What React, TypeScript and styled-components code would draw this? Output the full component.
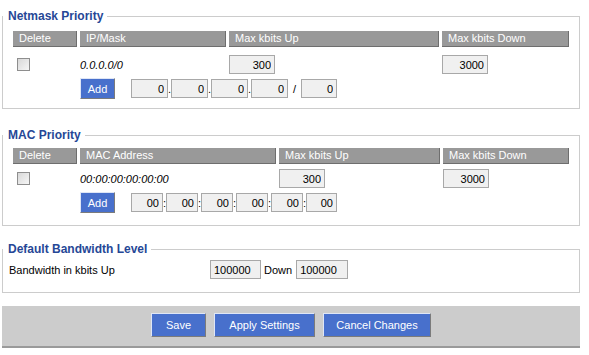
import React from 'react';
import styled, { createGlobalStyle } from 'styled-components';

const GlobalStyle = createGlobalStyle`
    body {
        margin: 0;
        background: #ffffff;
        font-family: "Liberation Sans", Arial, sans-serif;
        font-size: 11px;
        color: #000000;
    }
`;

const Page = styled.div`
    width: 578px;
    padding: 0 9px 0 2px;
    display: flex;
    flex-direction: column;
`;

const Section = styled.fieldset<{ $top: number; $pad?: string }>`
    margin: ${p => p.$top}px 0 0 0;
    padding: ${p => p.$pad || '0 9px 0 10px'};
    border: 1px solid #cccccc;
    min-width: 0;
`;

const Legend = styled.legend<{ $shift?: number }>`
    font-size: 12px;
    font-weight: bold;
    line-height: 14px;
    color: #264796;
    padding: 0 4px 0 5px;
    margin-left: ${p => (p.$shift ?? -10)}px;
`;

const Grid = styled.div<{ $cols: string; $lead: number; $tail: number }>`
    display: grid;
    grid-template-columns: ${p => p.$cols};
    column-gap: 3px;
    margin: ${p => p.$lead}px 0 ${p => p.$tail}px 0;
`;

const HeaderCell = styled.div`
    height: 16px;
    line-height: 15px;
    padding-left: 6px;
    background: #999999;
    color: #ffffff;
    border-right: 1px solid #6e6e6e;
    border-bottom: 1px solid #6e6e6e;
    box-sizing: border-box;
    white-space: nowrap;
`;

const Cell = styled.div<{ $top: number }>`
    display: flex;
    align-items: center;
    height: 19px;
    margin-top: ${p => p.$top}px;
`;

const Check = styled.input`
    appearance: none;
    width: 13px;
    height: 13px;
    margin: 0 0 0 4px;
    border: 1px solid #8e8e8e;
    background: linear-gradient(135deg, #d8d8d8, #f6f6f6);
    box-sizing: border-box;
`;

const Entry = styled.span`
    font-style: italic;
`;

const NumInput = styled.input<{ $w: number; $align?: string }>`
    width: ${p => p.$w}px;
    height: 19px;
    box-sizing: border-box;
    border: 1px solid #a8a8a8;
    background: #f0f0f0;
    font-family: "Liberation Sans", Arial, sans-serif;
    font-size: 11px;
    color: #000000;
    text-align: ${p => p.$align || 'right'};
    padding: 0 3px;
    margin: 0;
`;

const AddRow = styled.div`
    grid-column: 2 / span 3;
    display: flex;
    align-items: center;
    margin-top: 4px;
    height: 21px;
`;

const Blue = styled.button<{ $w: number; $h: number }>`
    width: ${p => p.$w}px;
    height: ${p => p.$h}px;
    padding: 0;
    background: #4870cc;
    color: #ffffff;
    font-family: "Liberation Sans", Arial, sans-serif;
    font-size: 11px;
    border: 1px solid;
    border-color: #dfe6f6 #7b7b7b #7b7b7b #dfe6f6;
    box-sizing: border-box;
`;

const Fields = styled.div`
    display: flex;
    align-items: center;
    margin-left: 16px;
`;

const Sep = styled.span<{ $w: number }>`
    display: inline-block;
    width: ${p => p.$w}px;
    text-align: center;
`;

const BandRow = styled.div`
    display: flex;
    align-items: center;
    height: 19px;
    margin: 4px 0 13px 0;
`;

const BandLabel = styled.span`
    width: 201px;
`;

const Down = styled.span`
    margin: 0 4px 0 3px;
`;

const Bar = styled.div`
    margin-top: 13px;
    height: 42px;
    background: #cccccc;
    border-bottom: 2px solid #9a9a9a;
    box-sizing: border-box;
    display: flex;
    justify-content: center;
    align-items: center;
    gap: 8px;
    padding-bottom: 2px;
`;

function Octets() {
    const parts = ['.', '.', '.', '/'];
    return (
        <Fields>
            {parts.map((s, i) => (
                <React.Fragment key={i}>
                    <NumInput $w={37} defaultValue="0" />
                    <Sep $w={s === '/' ? 13 : 3}>{s}</Sep>
                </React.Fragment>
            ))}
            <NumInput $w={36} defaultValue="0" />
        </Fields>
    );
}

function MacFields() {
    return (
        <Fields>
            {[0, 1, 2, 3, 4].map(i => (
                <React.Fragment key={i}>
                    <NumInput $w={32} defaultValue="00" />
                    <Sep $w={3}>:</Sep>
                </React.Fragment>
            ))}
            <NumInput $w={31} defaultValue="00" />
        </Fields>
    );
}

export default function App() {
    return (
        <>
            <GlobalStyle />
            <Page>
                <Section $top={9}>
                    <Legend>Netmask Priority</Legend>
                    <Grid $cols="64px 146px 210px 127px" $lead={8} $tail={9}>
                        <HeaderCell>Delete</HeaderCell>
                        <HeaderCell>IP/Mask</HeaderCell>
                        <HeaderCell>Max kbits Up</HeaderCell>
                        <HeaderCell>Max kbits Down</HeaderCell>
                        <Cell $top={8}><Check type="checkbox" /></Cell>
                        <Cell $top={8}><Entry>0.0.0.0/0</Entry></Cell>
                        <Cell $top={8}><NumInput $w={46} defaultValue="300" /></Cell>
                        <Cell $top={8}><NumInput $w={46} defaultValue="3000" /></Cell>
                        <AddRow>
                            <Blue $w={35} $h={21}>Add</Blue>
                            <Octets />
                        </AddRow>
                    </Grid>
                </Section>

                <Section $top={19}>
                    <Legend>MAC Priority</Legend>
                    <Grid $cols="64px 196px 161px 126px" $lead={6} $tail={12}>
                        <HeaderCell>Delete</HeaderCell>
                        <HeaderCell>MAC Address</HeaderCell>
                        <HeaderCell>Max kbits Up</HeaderCell>
                        <HeaderCell>Max kbits Down</HeaderCell>
                        <Cell $top={5}><Check type="checkbox" /></Cell>
                        <Cell $top={5}><Entry>00:00:00:00:00:00</Entry></Cell>
                        <Cell $top={5}><NumInput $w={46} defaultValue="300" /></Cell>
                        <Cell $top={5}><NumInput $w={46} defaultValue="3000" /></Cell>
                        <AddRow>
                            <Blue $w={35} $h={21}>Add</Blue>
                            <MacFields />
                        </AddRow>
                    </Grid>
                </Section>

                <Section $top={16} $pad="0 6px">
                    <Legend $shift={-6}>Default Bandwidth Level</Legend>
                    <BandRow>
                        <BandLabel>Bandwidth in kbits Up</BandLabel>
                        <NumInput $w={51} $align="left" defaultValue="100000" />
                        <Down>Down</Down>
                        <NumInput $w={52} $align="left" defaultValue="100000" />
                    </BandRow>
                </Section>

                <Bar>
                    <Blue $w={55} $h={24}>Save</Blue>
                    <Blue $w={101} $h={24}>Apply Settings</Blue>
                    <Blue $w={108} $h={24}>Cancel Changes</Blue>
                </Bar>
            </Page>
        </>
    );
}
